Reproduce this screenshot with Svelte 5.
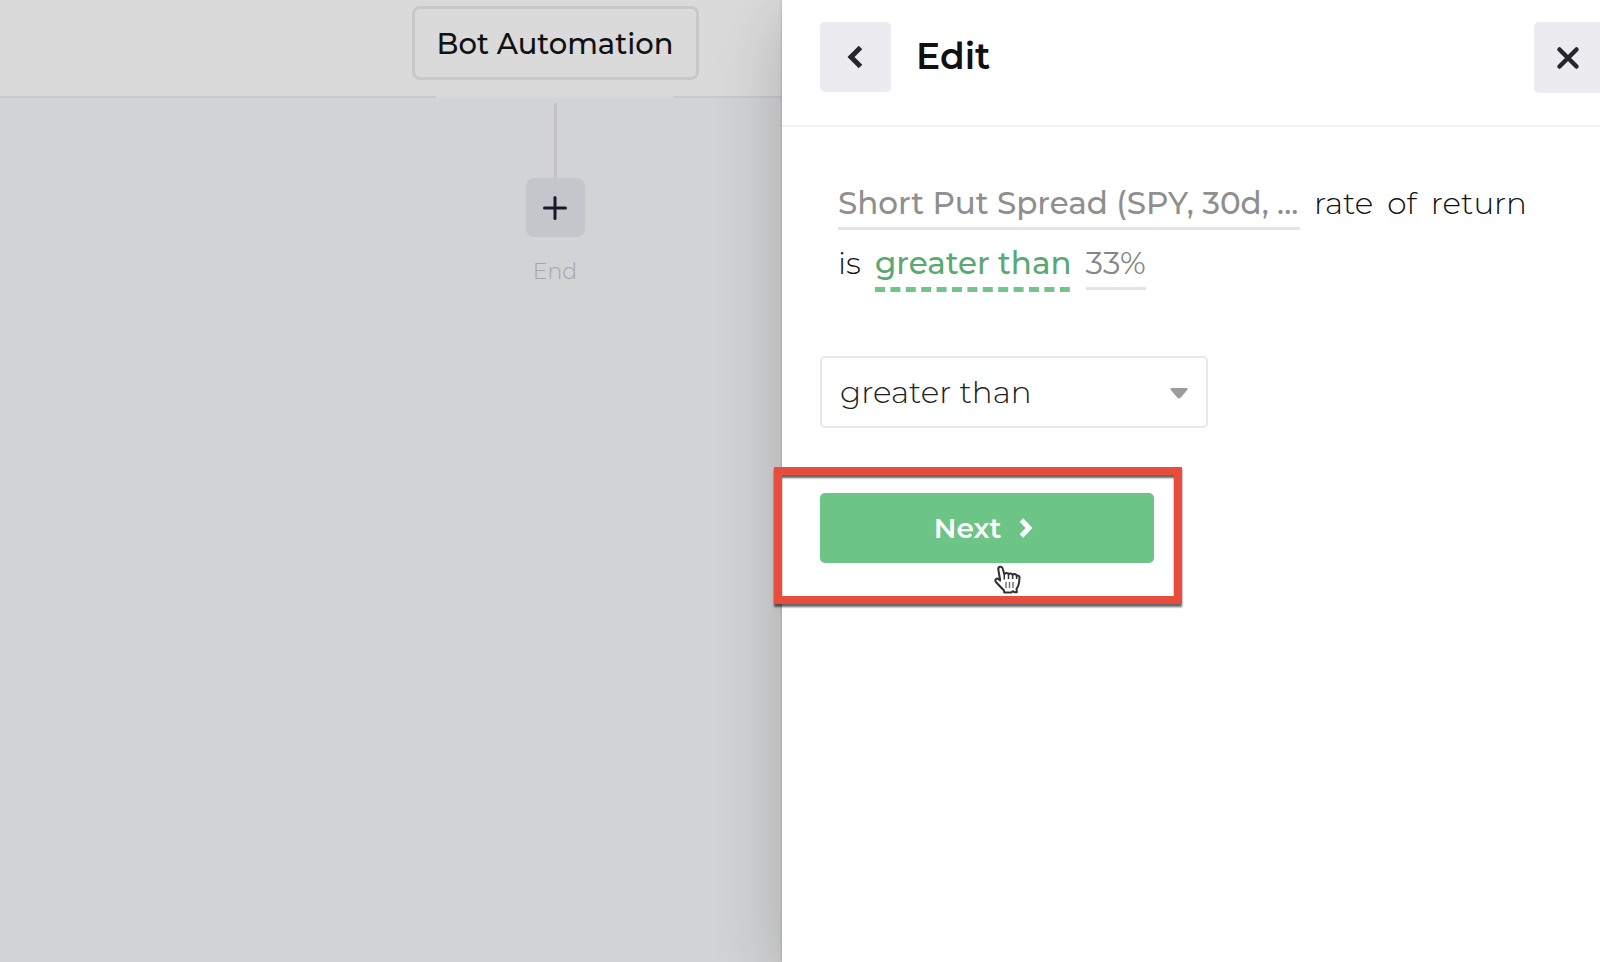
<script>
  let comparison = $state('greater than');
  const outcome = ['rate', 'of', 'return'];
</script>

<div class="page">
  <main class="workspace">
    <header class="topbar">
      <button class="automation" type="button">Bot Automation</button>
      <span class="tab-edge"></span>
    </header>
    <section class="flow">
      <span class="connector"></span>
      <button class="add" type="button" aria-label="Add step">
        <svg viewBox="0 0 24 24" width="24" height="24" fill="none" stroke="#171a26" stroke-width="3" stroke-linecap="round">
          <path d="M12 1.500V22.500M1.500 12H22.500" />
        </svg>
      </button>
      <span class="end">End</span>
    </section>
  </main>

  <aside class="drawer">
    <header class="drawer-head">
      <button class="square" type="button" aria-label="Back">
        <svg viewBox="0 0 18 24" width="18" height="24" fill="none" stroke="#25272c" stroke-width="5">
          <path d="M13.500 2.500L4 12L13.500 21.500" />
        </svg>
      </button>
      <h1>Edit</h1>
      <button class="square close" type="button" aria-label="Close">
        <svg viewBox="0 0 24 24" width="24" height="24" fill="none" stroke="#25272c" stroke-width="4.500" stroke-linecap="round">
          <path d="M3.500 3.500L20.500 20.500M20.500 3.500L3.500 20.500" />
        </svg>
      </button>
    </header>

    <div class="drawer-body">
      <div class="sentence">
        <a class="field position" href="#position">Short Put Spread (SPY, 30d, ...</a>
        {#each outcome as word}
          <span>{word}</span>
        {/each}
        <span>is</span>
        <a class="field active" href="#comparison">
          {comparison}
          <svg class="dashes" width="100%" height="5" aria-hidden="true">
            <line x1="0" y1="2.500" x2="100%" y2="2.500" stroke="#72c48c" stroke-width="5" stroke-dasharray="10 5.400" />
          </svg>
        </a>
        <a class="field" href="#amount">33%</a>
      </div>

      <div class="select">
        <select bind:value={comparison} aria-label="Comparison">
          <option>greater than</option>
          <option>less than</option>
        </select>
        <svg class="caret" viewBox="0 0 18 11" width="18" height="11" aria-hidden="true">
          <path d="M1.500 0H16.500Q18.500 0.500 17 2.200L10.500 9.800Q9 11.200 7.500 9.800L1 2.200Q-.5 .5 1.500 0Z" fill="#9b9b9b" />
        </svg>
      </div>

      <div class="action">
        <button class="next" type="button">
          Next
          <svg viewBox="0 0 14 20" width="14" height="20" fill="none" stroke="#fff" stroke-width="5">
            <path d="M2.500 2L10 10L2.500 18" />
          </svg>
        </button>
        <span class="highlight"></span>
        <svg class="pointer" viewBox="0 0 27 29" width="27" height="29" aria-hidden="true">
          <path
            d="M6.200 15.500L4.300 4.500C3.900 1.200 8 .6 8.700 3.600L10.300 9.200C11.300 7.300 14 7.600 14.500 9.300C15.600 7.900 18 8.300 18.600 10C19.800 8.500 22 8.800 22.600 10.700C24.500 10 25.700 11.200 25.500 13.200C25.300 17.700 24.700 21 22.600 23.700L22.800 27.200H20.300L18.700 26.200L17.300 27.500H10.300L9.900 25.200C7.100 22.800 4.200 19.500 1.600 16.600C.7 14.700 2.600 12.900 4.300 13.900Z"
            fill="#fff" stroke="#303030" stroke-width="2" stroke-linejoin="round" />
          <path d="M10.300 9V14.500M14.500 9.500V14M18.600 10V14M22.600 11V14" stroke="#303030" stroke-width="1.500" />
          <path d="M12 17V23M15.500 17V23M19 17V23" stroke="#777" stroke-width="1.500" />
        </svg>
      </div>
    </div>
  </aside>
</div>

<style>
  :global(body) {
    margin: 0;
  }

  .page {
    display: grid;
    grid-template-columns: 782fr 328fr 490fr;
    min-height: 100vh;
    overflow: hidden;
    background: #d2d3d5;
    color: #111;
    font-family: Montserrat, Inter, "Open Sans", sans-serif;
  }

  button,
  select {
    font: inherit;
    color: inherit;
    box-sizing: border-box;
  }

  button {
    display: flex;
    align-items: center;
    justify-content: center;
    border: 0;
    padding: 0;
  }

  .workspace {
    grid-row: 1;
    grid-column: 1 / 3;
    display: flex;
    flex-direction: column;
  }

  .topbar {
    position: relative;
    display: flex;
    justify-content: center;
    padding: 6px 0 16px;
    background: #dadada;
    border-bottom: 2px solid #c9c9ca;
  }

  .automation {
    height: 74px;
    padding: 0 20px;
    min-width: 287px;
    border: 3px solid #c8c8c8;
    border-radius: 8px;
    background: #dadada;
    font-size: 29px;
    font-weight: 500;
  }

  .tab-edge {
    position: absolute;
    bottom: -2px;
    left: 50%;
    width: 238px;
    height: 2px;
    margin-left: -119px;
    background: #d7d7d8;
  }

  .flow {
    display: flex;
    flex-direction: column;
    align-items: center;
    padding-top: 5px;
  }

  .connector {
    width: 3px;
    height: 75px;
    background: #c3c2c5;
  }

  .add {
    width: 59px;
    height: 59px;
    border-radius: 8px;
    background: #c5c6cb;
  }

  .end {
    margin-top: 20px;
    color: #a6a7a9;
    font-size: 22px;
    font-weight: 300;
    line-height: 30px;
  }

  .drawer {
    grid-row: 1;
    grid-column: 2 / 4;
    z-index: 1;
    background: #fff;
    box-shadow: 0 0 3px rgba(0, 0, 0, 0.2), 0 20px 64px rgba(0, 0, 0, 0.2);
  }

  .drawer-head {
    display: flex;
    align-items: flex-start;
    padding: 22px 0 32px 38px;
    border-bottom: 2px solid #f2f2f3;
  }

  .square {
    width: 71px;
    height: 70px;
    border-radius: 5px;
    background: #ebebf0;
  }

  .close {
    width: 66px;
    height: 71px;
    padding-left: 2px;
    margin-left: auto;
    border-radius: 5px 0 0 5px;
  }

  h1 {
    margin: 0 0 0 25px;
    font-size: 36px;
    font-weight: 600;
    line-height: 68px;
  }

  .drawer-body {
    padding: 46px 38px;
  }

  .sentence {
    display: flex;
    flex-wrap: wrap;
    gap: 0 14px;
    padding: 0 18px;
    font-size: 31px;
    font-weight: 300;
    line-height: 60px;
  }

  .field {
    position: relative;
    height: 60px;
    color: #8f8f8f;
    font-weight: 500;
    text-decoration: none;
    background: linear-gradient(#e4e4e4, #e4e4e4) 0 54px / 100% 3px no-repeat;
  }

  .position {
    min-width: 462px;
  }

  .active {
    color: #5aa873;
    background: none;
  }

  .active + .field {
    font-weight: 400;
    color: #868686;
  }

  .dashes {
    position: absolute;
    left: 0;
    bottom: 1px;
  }

  .select {
    position: relative;
    width: 388px;
    margin-top: 63px;
  }

  select {
    width: 100%;
    height: 72px;
    padding: 0 60px 0 18px;
    border: 2px solid #e8e8e8;
    border-radius: 5px;
    background: #fff;
    color: #222;
    font-size: 31px;
    font-weight: 300;
    appearance: none;
  }

  .caret {
    position: absolute;
    right: 20px;
    top: 32px;
    pointer-events: none;
  }

  .action {
    position: relative;
    width: 334px;
    margin-top: 65px;
  }

  .next {
    gap: 18px;
    width: 100%;
    height: 70px;
    padding-right: 7px;
    border-radius: 5px;
    background: #6cc487;
    color: #fff;
    font-size: 28px;
    font-weight: 600;
  }

  .highlight {
    position: absolute;
    inset: -26px -28px -41px -46px;
    border: 8px solid #e74c3c;
    box-shadow: 0 3px 2px rgba(0, 0, 0, 0.6), inset 0 3px 2px rgba(0, 0, 0, 0.6);
    pointer-events: none;
  }

  .pointer {
    position: absolute;
    left: 174px;
    top: 72px;
    pointer-events: none;
  }
</style>
